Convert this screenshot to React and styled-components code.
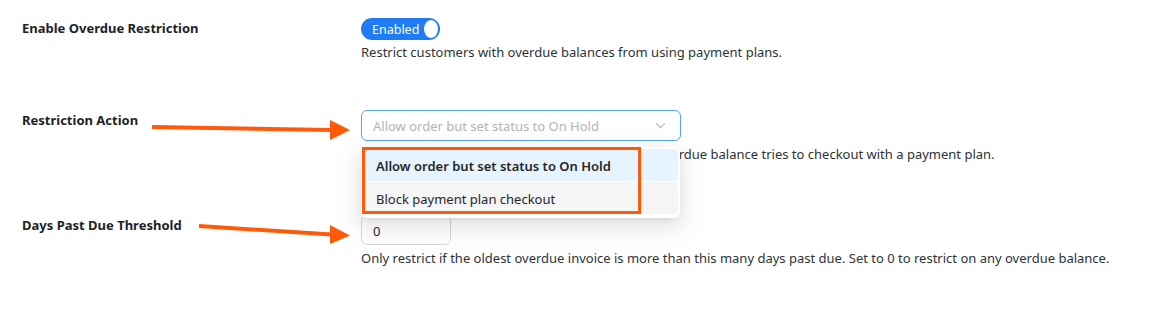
import styled, { createGlobalStyle } from 'styled-components';

const GlobalStyle = createGlobalStyle`
  body {
    margin: 0;
    background: #fff;
    font-family: "Noto Sans", "Open Sans", sans-serif;
    color: #1d2327;
  }
`;

const ORANGE = '#ff5a0a';

const App = () => {
  return (
    <Page>
      <GlobalStyle />
      <Row $top={18}>
        <Label>Enable Overdue Restriction</Label>
        <Field>
          <Toggle>
            <ToggleText>Enabled</ToggleText>
            <Knob />
          </Toggle>
          <Description>Restrict customers with overdue balances from using payment plans.</Description>
        </Field>
      </Row>

      <Row $top={49}>
        <Label>Restriction Action</Label>
        <Field>
          <SelectWrap>
            <Select>
              <Placeholder>Allow order but set status to On Hold</Placeholder>
              <Chevron viewBox="0 0 12 8">
                <path d="M1 1.5 L6 6.5 L11 1.5" fill="none" stroke="#b5b5b5" strokeWidth="1.2" />
              </Chevron>
            </Select>
            <Menu>
              <Option $active>Allow order but set status to On Hold</Option>
              <Option>Block payment plan checkout</Option>
              <Highlight />
            </Menu>
          </SelectWrap>
          <Description $gap={4}>
            Choose what happens when a customer with an overdue balance tries to checkout with a payment plan.
          </Description>
        </Field>
      </Row>

      <Row $top={52}>
        <Label>Days Past Due Threshold</Label>
        <Field>
          <NumberInput defaultValue="0" />
          <Description $gap={4}>
            Only restrict if the oldest overdue invoice is more than this many days past due. Set to 0 to restrict on any overdue balance.
          </Description>
        </Field>
      </Row>

      <Arrows viewBox="0 0 1175 317">
        <line x1="152" y1="127" x2="332" y2="130" stroke={ORANGE} strokeWidth="4" />
        <polygon points="330,120 350,130 330,140" fill={ORANGE} />
        <line x1="199" y1="226" x2="332" y2="234.5" stroke={ORANGE} strokeWidth="4" />
        <polygon points="330,225 350,235.5 330,244" fill={ORANGE} />
      </Arrows>
    </Page>
  );
};

const Page = styled.div`
  position: relative;
  width: 1175px;
  height: 317px;
  overflow: hidden;
  padding-left: 22px;
  box-sizing: border-box;
`;

const Row = styled.div`
  display: grid;
  grid-template-columns: 339px 1fr;
  padding-top: ${p => p.$top}px;
`;

const Label = styled.div`
  font-size: 13px;
  font-weight: 700;
  color: #1d2327;
  padding-top: 1px;
  line-height: 18px;
`;

const Field = styled.div`
  display: flex;
  flex-direction: column;
  align-items: flex-start;
`;

const Description = styled.p`
  margin: ${p => p.$gap || 3}px 0 0;
  font-size: 13px;
  line-height: 18px;
  color: #2c3338;
  white-space: nowrap;
`;

const Toggle = styled.div`
  display: flex;
  align-items: center;
  gap: 5px;
  height: 22px;
  width: 79px;
  box-sizing: border-box;
  padding: 0 2px 0 11px;
  background: #1f7cf5;
  border-radius: 11px;
`;

const ToggleText = styled.span`
  color: #fff;
  font-size: 12.5px;
  flex: 1;
`;

const Knob = styled.span`
  width: 18px;
  height: 18px;
  border-radius: 50%;
  background: #fff;
`;

const SelectWrap = styled.div`
  position: relative;
`;

const Select = styled.div`
  width: 320px;
  height: 31px;
  box-sizing: border-box;
  border: 1px solid #5aa3f5;
  border-radius: 6px;
  display: flex;
  align-items: center;
  justify-content: space-between;
  padding: 0 14px 0 11px;
  background: #fff;
`;

const Placeholder = styled.span`
  font-size: 13px;
  color: #b4b4b4;
`;

const Chevron = styled.svg`
  width: 11px;
  height: 7px;
`;

const Menu = styled.div`
  position: absolute;
  top: 37px;
  left: 0;
  width: 319px;
  padding: 2px 0 3px;
  background: #fff;
  border-radius: 6px;
  box-shadow: 0 6px 16px rgba(0, 0, 0, 0.08), 0 3px 6px -4px rgba(0, 0, 0, 0.12),
    0 9px 28px 8px rgba(0, 0, 0, 0.05);
  z-index: 5;
`;

const Option = styled.div`
  height: 32px;
  margin: 0 2px 1px;
  padding: 1px 13px 0;
  box-sizing: border-box;
  display: flex;
  align-items: center;
  border-radius: 4px;
  font-size: 13px;
  font-weight: ${p => (p.$active ? 600 : 400)};
  color: #262626;
  background: ${p => (p.$active ? '#e6f4ff' : '#f5f5f5')};
`;

const Highlight = styled.div`
  position: absolute;
  left: 1px;
  top: 0;
  width: 279px;
  height: 67px;
  box-sizing: border-box;
  border: 3px solid ${ORANGE};
  pointer-events: none;
`;

const NumberInput = styled.input`
  width: 90px;
  height: 30px;
  box-sizing: border-box;
  border: 1px solid #d9d9d9;
  border-radius: 6px;
  padding: 1px 11px 0;
  font-family: inherit;
  font-size: 13px;
  color: #262626;
  outline: none;
`;

const Arrows = styled.svg`
  position: absolute;
  left: 0;
  top: 0;
  width: 1175px;
  height: 317px;
  pointer-events: none;
  z-index: 10;
`;

export default App;
